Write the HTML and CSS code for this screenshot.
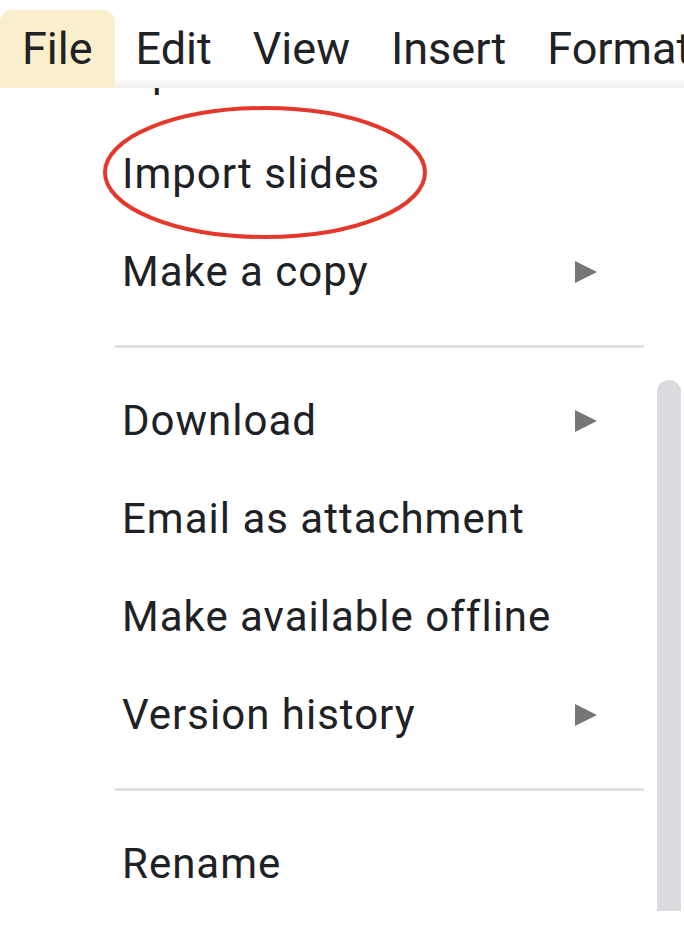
FILE: index.html
```html
<!DOCTYPE html>
<html>
<head>
<meta charset="utf-8">
<link rel="stylesheet" href="styles.css">
</head>
<body>
<div class="page">
  <div class="menubar">
    <div class="tab active">File</div>
    <div class="tab">Edit</div>
    <div class="tab">View</div>
    <div class="tab">Insert</div>
    <div class="tab">Format</div>
  </div>
  <div class="panel">
    <div class="viewport">
      <div class="list">
        <div class="item item-first"><span>Open</span></div>
        <div class="item"><span>Import slides</span></div>
        <div class="item"><span>Make a copy</span><span class="arrow"></span></div>
        <div class="sep"></div>
        <div class="item"><span>Download</span><span class="arrow"></span></div>
        <div class="item"><span>Email as attachment</span></div>
        <div class="item"><span>Make available offline</span></div>
        <div class="item"><span>Version history</span><span class="arrow"></span></div>
        <div class="sep"></div>
        <div class="item"><span>Rename</span></div>
      </div>
    </div>
    <div class="scrollbar"></div>
  </div>
  <svg class="circle" width="340" height="145" viewBox="0 0 340 145">
    <ellipse cx="170" cy="72.5" rx="160" ry="64.5" fill="none" stroke="#e5382b" stroke-width="4"/>
  </svg>
</div>
</body>
</html>
```
FILE: styles.css
```css
html, body {
  margin: 0;
  padding: 0;
  background: #ffffff;
}
.page {
  position: relative;
  width: 684px;
  height: 926px;
  overflow: hidden;
  font-family: Roboto, "Noto Sans", sans-serif;
  color: #202124;
}
.menubar {
  height: 88px;
  display: flex;
  align-items: flex-end;
  white-space: nowrap;
  background: linear-gradient(to bottom, #ffffff 0, #ffffff 78px, #eeeeef 88px);
  position: relative;
  z-index: 1;
}
.tab {
  height: 78px;
  box-sizing: border-box;
  padding: 0 20.5px;
  font-size: 45px;
  line-height: 78px;
  flex: none;
}
.tab.active {
  width: 115px;
  padding-left: 22px;
  background: #faefcc;
  border-radius: 12px 12px 0 0;
}
.panel {
  height: 838px;
  display: flex;
  background: #ffffff;
}
.viewport {
  width: 644px;
  height: 838px;
  overflow: hidden;
  flex: none;
}
.list {
  margin-top: -65px;
}
.item {
  height: 98px;
  display: flex;
  align-items: center;
  justify-content: space-between;
  padding-left: 122px;
  padding-right: 47px;
  font-size: 42px;
  line-height: 98px;
  letter-spacing: 1px;
  white-space: nowrap;
}
.item-first {
  height: 102px;
  align-items: flex-start;
}
.arrow {
  width: 0;
  height: 0;
  border-top: 11px solid transparent;
  border-bottom: 11px solid transparent;
  border-left: 22px solid #767676;
}
.sep {
  height: 3px;
  margin: 24px 0 24px 115px;
  background: #e1e1e4;
}
.scrollbar {
  width: 24px;
  height: 531px;
  margin-top: 292px;
  margin-left: 13px;
  background: #dadbdf;
  border-radius: 12px 12px 0 0;
  flex: none;
}
.circle {
  position: absolute;
  left: 94.5px;
  top: 100px;
}
```
